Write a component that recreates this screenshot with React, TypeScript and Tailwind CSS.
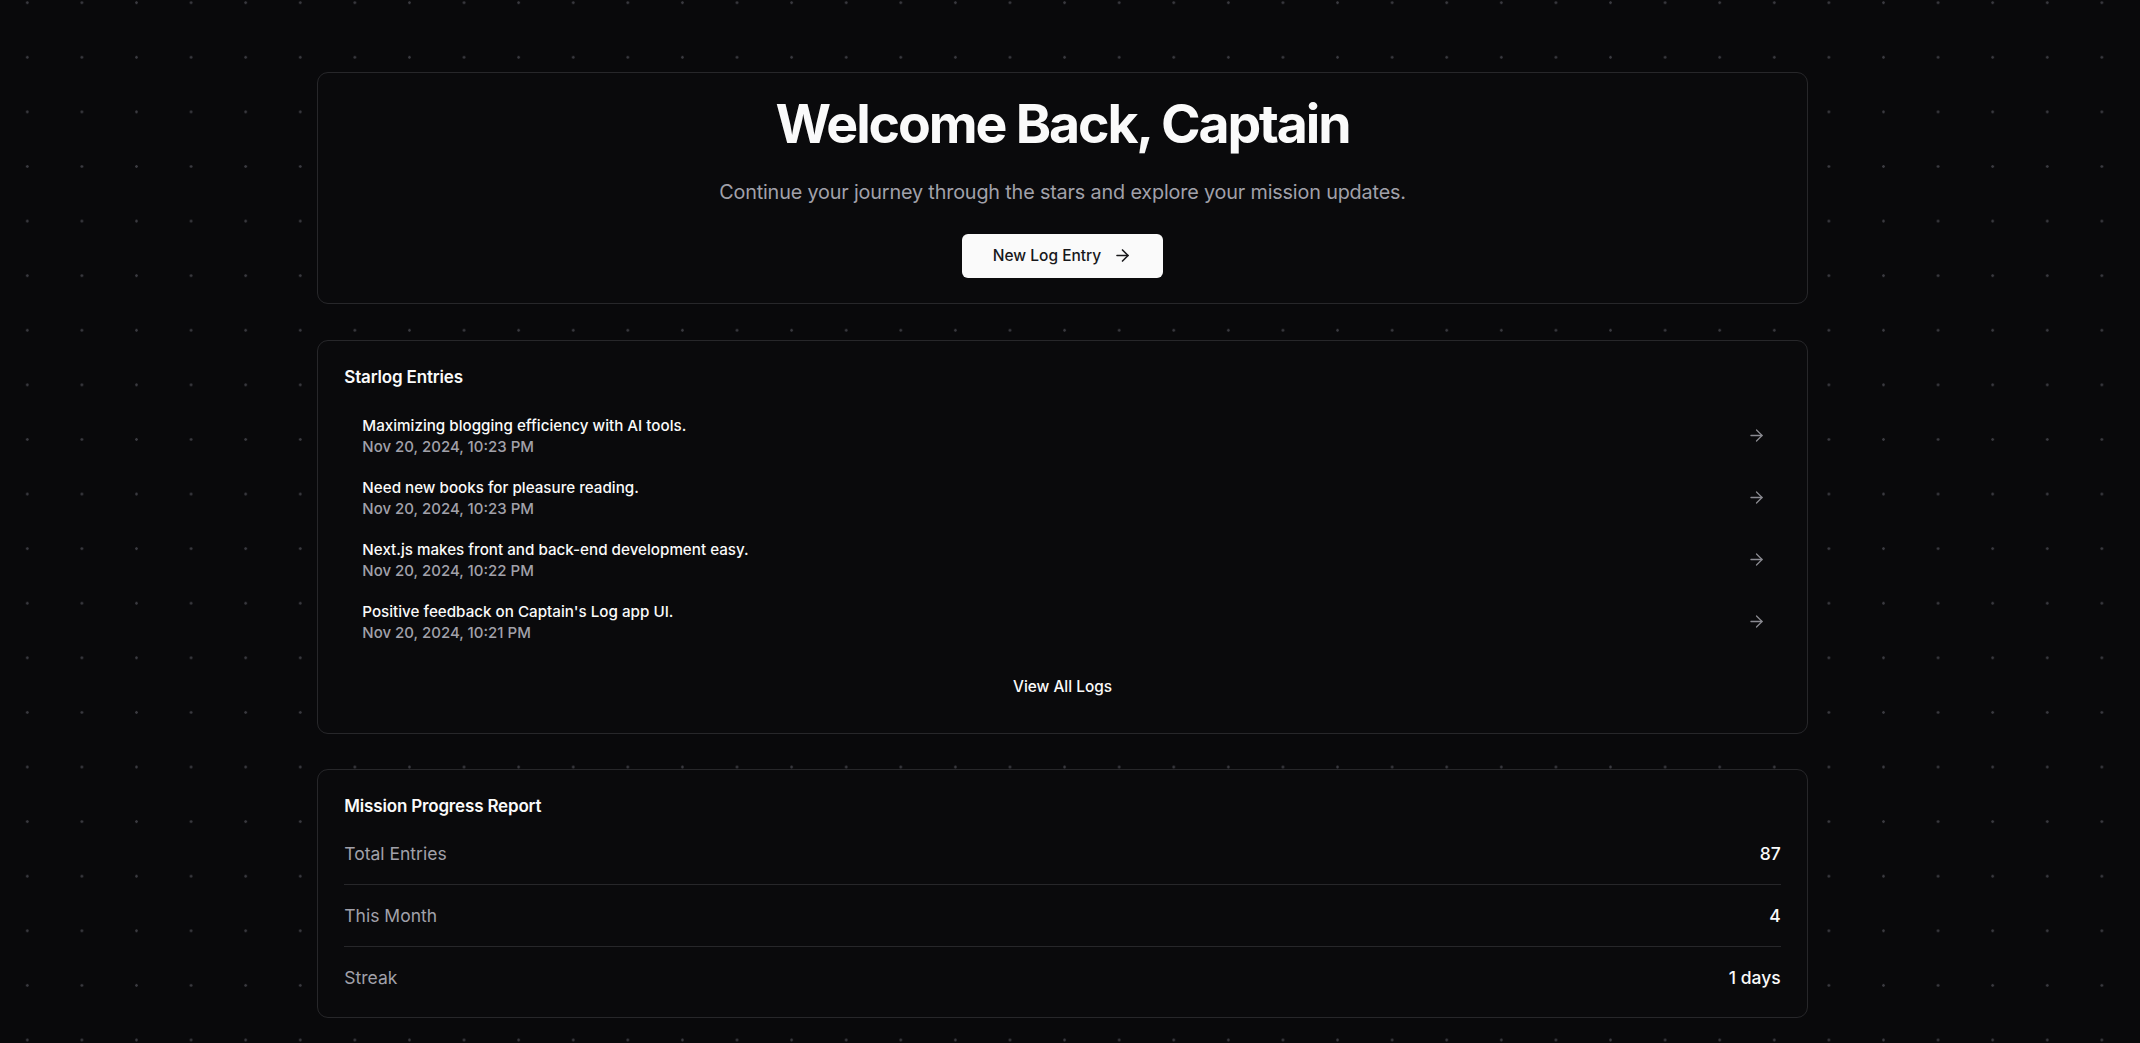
import { ArrowRight } from "lucide-react"

const entries = [
  { title: "Maximizing blogging efficiency with AI tools.", date: "Nov 20, 2024, 10:23 PM" },
  { title: "Need new books for pleasure reading.", date: "Nov 20, 2024, 10:23 PM" },
  { title: "Next.js makes front and back-end development easy.", date: "Nov 20, 2024, 10:22 PM" },
  { title: "Positive feedback on Captain's Log app UI.", date: "Nov 20, 2024, 10:21 PM" },
]

const stats = [
  { label: "Total Entries", value: "87" },
  { label: "This Month", value: "4" },
  { label: "Streak", value: "1 days" },
]

export default function App() {
  return (
    <div className="h-[1043px] overflow-hidden bg-[#09090b] bg-[radial-gradient(circle,#3a3a40_1px,transparent_1.6px)] bg-[size:54.6px_54.6px] bg-[position:0_-24.6px] pr-[15px] font-['Inter',sans-serif] text-[#fafafa]">
      <main className="mx-auto w-[1491px] pt-[72.3px]">
        {/* Hero */}
        <section className="rounded-[11px] border border-[#27272a] bg-[#0a0a0c] pt-[23.5px] pb-[25.6px] flex flex-col items-center">
          <h1 className="text-[53.6px] leading-[54.6px] font-bold tracking-[-0.04em]">
            Welcome Back, Captain
          </h1>
          <p className="mt-[28px] text-[19.8px] leading-[27px] tracking-[-0.008em] text-[#a1a1aa]">
            Continue your journey through the stars and explore your mission updates.
          </p>
          <button className="mt-[27.8px] h-[43.4px] w-[201px] rounded-[6px] bg-[#fafafa] text-[#18181b] text-[15.5px] font-medium flex items-center justify-center gap-[12px]">
            New Log Entry
            <ArrowRight size={19} strokeWidth={2} />
          </button>
        </section>

        {/* Starlog Entries */}
        <section className="mt-[36px] rounded-[11px] border border-[#27272a] bg-[#0a0a0c] px-[26.3px] pt-[23.5px] pb-[26.5px]">
          <h2 className="text-[17px] leading-[24px] font-semibold tracking-[-0.01em]">Starlog Entries</h2>
          <ul className="mt-[16px]">
            {entries.map((e) => (
              <li key={e.title} className="flex items-center justify-between rounded-[8px] pl-[18px] pr-[15px] py-[10px]">
                <div>
                  <div className="text-[15.2px] leading-[21px] font-medium">{e.title}</div>
                  <div className="text-[15px] leading-[21px] font-medium text-[#a1a1aa]">{e.date}</div>
                </div>
                <ArrowRight size={19} strokeWidth={1.6} className="text-[#8b8b92]" />
              </li>
            ))}
          </ul>
          <div className="mt-[14px] flex justify-center">
            <button className="h-[40px] px-[16px] text-[15.4px] font-medium flex items-center">View All Logs</button>
          </div>
        </section>

        {/* Mission Progress */}
        <section className="mt-[35px] rounded-[11px] border border-[#27272a] bg-[#0a0a0c] px-[26.3px] pt-[23.5px] pb-[9.3px]">
          <h2 className="text-[17px] leading-[24px] font-semibold tracking-[-0.01em]">Mission Progress Report</h2>
          <div className="mt-[5.2px]">
            {stats.map((s, i) => (
              <div
                key={s.label}
                className={
                  i < stats.length - 1
                    ? "flex items-center justify-between pt-[19.5px] pb-[17.5px] border-b border-[#27272a]"
                    : "flex items-center justify-between pt-[19.5px] pb-[17.5px]"
                }
              >
                <span className="text-[17.5px] leading-[24px] text-[#a1a1aa]">{s.label}</span>
                <span className="text-[17.5px] leading-[24px] font-medium">{s.value}</span>
              </div>
            ))}
          </div>
        </section>
      </main>
    </div>
  )
}
